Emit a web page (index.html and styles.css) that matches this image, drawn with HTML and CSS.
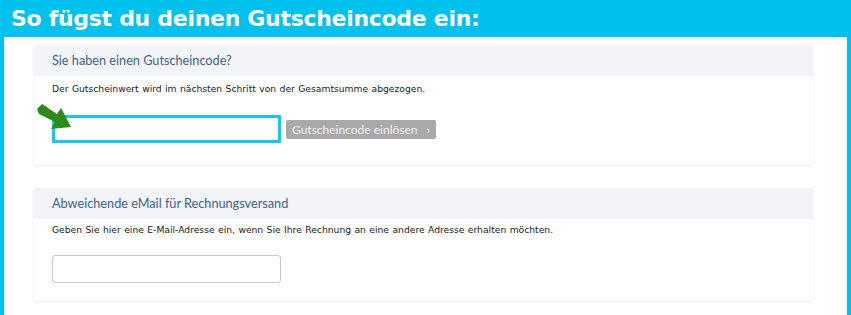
FILE: index.html
```html
<!DOCTYPE html>
<html lang="de">
<head>
<meta charset="UTF-8">
<title>Gutscheincode einlösen</title>
<link rel="stylesheet" href="styles.css">
</head>
<body>
<div class="frame">
    <h1 class="title">So fügst du deinen Gutscheincode ein:</h1>
    <div class="panel">
        <div class="card">
            <div class="card-head">Sie haben einen Gutscheincode?</div>
            <div class="card-body">
                <p class="hint">Der Gutscheinwert wird im nächsten Schritt von der Gesamtsumme abgezogen.</p>
                <div class="voucher-row">
                    <input type="text" class="voucher-input">
                    <button class="redeem">Gutscheincode einlösen <span class="chev">›</span></button>
                    <svg class="arrow" width="36" height="28" viewBox="0 0 36 28">
                        <polygon points="0,5 5,0 20,10 24,4 34,23 14,25 18,18 2,10" fill="#2f8a1c"/>
                    </svg>
                </div>
            </div>
        </div>
        <div class="card">
            <div class="card-head">Abweichende eMail für Rechnungsversand</div>
            <div class="card-body second">
                <p class="hint">Geben Sie hier eine E-Mail-Adresse ein, wenn Sie Ihre Rechnung an eine andere Adresse erhalten möchten.</p>
                <input type="text" class="mail-input">
            </div>
        </div>
    </div>
</div>
</body>
</html>
```

FILE: styles.css
```css
body {
    margin: 0;
    font-family: "DejaVu Sans", Verdana, sans-serif;
}
.frame {
    width: 851px;
    height: 315px;
    box-sizing: border-box;
    background-color: #00c1ee;
    padding: 0 4px 3px 4px;
    display: flex;
    flex-direction: column;
}
.title {
    margin: 0;
    height: 38px;
    line-height: 37px;
    padding-left: 7px;
    font-size: 22px;
    font-weight: bold;
    letter-spacing: -0.3px;
    color: #fff;
}
.panel {
    flex: 1;
    background-color: #fff;
    padding: 8px 34px 0 30px;
}
.card {
    background-color: #fff;
    box-shadow: 0 1px 3px rgba(0, 0, 0, 0.08);
    margin-bottom: 23px;
}
.card-head {
    height: 31px;
    line-height: 31px;
    padding-left: 18px;
    background-color: #f3f4f8;
    font-family: Lato, sans-serif;
    font-size: 12.7px;
    color: #41638a;
}
.card-body {
    padding: 7px 18px 22px;
}
.card-body.second {
    padding: 5px 18px 18px;
}
.hint {
    margin: 0 0 20px;
    font-size: 9.2px;
    word-spacing: 0.5px;
    line-height: 12px;
    color: #222;
}
.second .hint {
    margin-bottom: 19px;
}
.voucher-row {
    position: relative;
    display: flex;
    align-items: center;
}
.voucher-input {
    width: 229px;
    height: 28px;
    box-sizing: border-box;
    border: 3px solid #1ec3ec;
    border-radius: 1px;
    margin: 0 5px 0 0;
}
.redeem {
    height: 19px;
    width: 150px;
    padding: 0;
    border: none;
    border-radius: 2px;
    background-color: #a9a9a9;
    color: #f0f0f0;
    font-family: Lato, sans-serif;
    font-size: 12px;
    line-height: 19px;
}
.chev {
    margin-left: 6px;
}
.arrow {
    position: absolute;
    left: -15px;
    top: -11px;
}
.mail-input {
    display: block;
    width: 229px;
    height: 28px;
    box-sizing: border-box;
    border: 1px solid #c8c8c8;
    border-radius: 3px;
}
```
